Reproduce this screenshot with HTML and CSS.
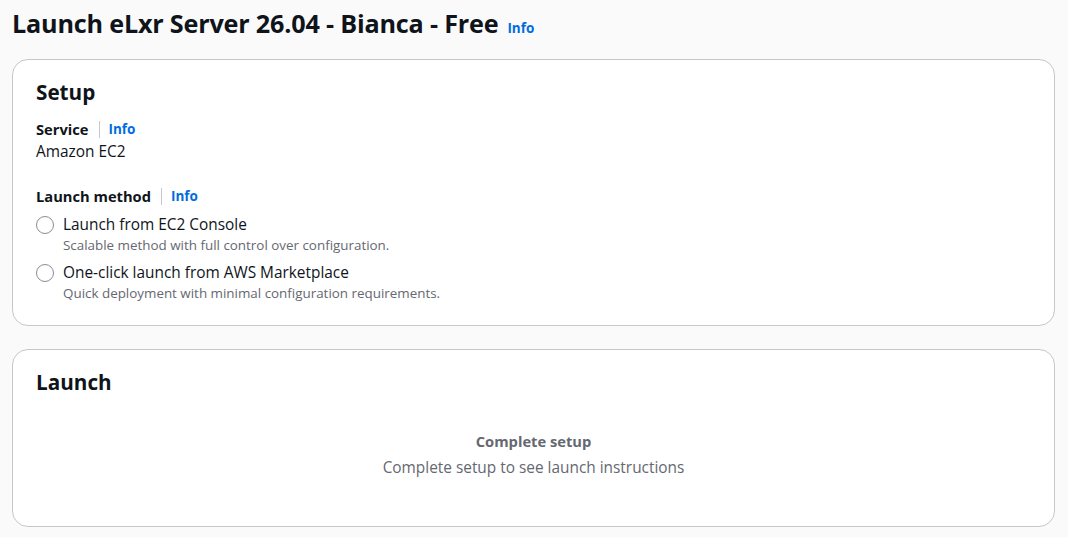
FILE: index.html
```html
<!DOCTYPE html>
<html lang="en">
<head>
<meta charset="utf-8">
<title>Launch eLxr Server</title>
<link rel="stylesheet" href="styles.css">
</head>
<body>
<div class="page">
  <header class="page-header">
    <h1 class="page-title">Launch eLxr Server 26.04 - Bianca - Free</h1>
    <a class="info-link" href="#">Info</a>
  </header>

  <section class="card card-setup">
    <h2 class="card-title">Setup</h2>
    <div class="field">
      <div class="field-label"><span class="label-text">Service</span><span class="divider"></span><a class="info-link" href="#">Info</a></div>
      <div class="field-value">Amazon EC2</div>
    </div>
    <div class="field field-gap">
      <div class="field-label"><span class="label-text">Launch method</span><span class="divider"></span><a class="info-link" href="#">Info</a></div>
      <div class="radio-group">
        <label class="radio">
          <span class="radio-circle"></span>
          <span class="radio-text">
            <span class="radio-label">Launch from EC2 Console</span>
            <span class="radio-desc">Scalable method with full control over configuration.</span>
          </span>
        </label>
        <label class="radio">
          <span class="radio-circle"></span>
          <span class="radio-text">
            <span class="radio-label">One-click launch from AWS Marketplace</span>
            <span class="radio-desc">Quick deployment with minimal configuration requirements.</span>
          </span>
        </label>
      </div>
    </div>
  </section>

  <section class="card card-launch">
    <h2 class="card-title">Launch</h2>
    <div class="empty">
      <div class="empty-title">Complete setup</div>
      <div class="empty-desc">Complete setup to see launch instructions</div>
    </div>
  </section>
</div>
</body>
</html>
```

FILE: styles.css
```css
* { box-sizing: border-box; }
html, body { margin: 0; padding: 0; }
body {
  background: #fafafa;
  font-family: "Open Sans", "Noto Sans", Arial, sans-serif;
  color: #0f141a;
  font-size: 15.4px;
  line-height: 22px;
}
.page {
  padding: 8px 13px 10px 12px;
  display: flex;
  flex-direction: column;
  gap: 23px;
}
.page-header {
  display: flex;
  align-items: baseline;
  gap: 9px;
  height: 28px;
}
.page-title {
  margin: 0;
  font-size: 25.2px;
  line-height: 30px;
  font-weight: 700;
  letter-spacing: -0.2px;
}
.info-link {
  color: #006ce0;
  font-weight: 700;
  font-size: 13.5px;
  text-decoration: none;
}
.card {
  background: #ffffff;
  border: 1px solid #c6c6cd;
  border-radius: 16px;
  padding: 18px 23px 23px 23px;
}
.card-launch { padding-bottom: 9px; }
.card-title {
  margin: 0;
  font-size: 20.7px;
  line-height: 28px;
  font-weight: 700;
}
.field { margin-top: 12px; }
.field-gap { margin-top: 22px; }
.field-label {
  display: flex;
  align-items: center;
  font-weight: 700;
  font-size: 14.7px;
  line-height: 22px;
}
.divider {
  width: 1px;
  height: 17px;
  background: #c6c6cd;
  margin: 0 9px 0 10px;
}
.field-value { line-height: 23px; }
.radio-group {
  display: flex;
  flex-direction: column;
  gap: 8px;
  margin-top: 7px;
}
.radio {
  display: flex;
  align-items: flex-start;
  gap: 9px;
}
.radio-circle {
  width: 18px;
  height: 18px;
  border: 1.5px solid #8c8c94;
  border-radius: 50%;
  margin-top: 2px;
  flex: none;
}
.radio-text { display: flex; flex-direction: column; }
.radio-label { line-height: 22px; }
.radio-desc { font-size: 13.4px; line-height: 18px; color: #656871; }
.empty {
  display: flex;
  flex-direction: column;
  align-items: center;
  padding: 34px 0 38px;
  color: #656871;
}
.empty-title { font-weight: 700; font-size: 14.7px; line-height: 22px; }
.empty-desc { margin-top: 5px; line-height: 22px; }
```
